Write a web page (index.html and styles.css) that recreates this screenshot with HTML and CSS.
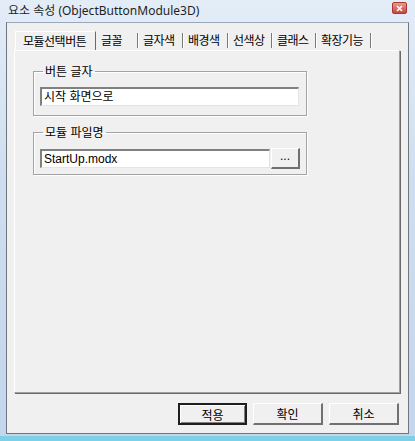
FILE: index.html
```html
<!DOCTYPE html>
<html lang="ko">
  <head>
    <meta charset="UTF-8" />
    <title>요소 속성</title>
    <link rel="stylesheet" href="styles.css">
  </head>
  <body>
    <div class="window">
      <!-- Title bar -->
      <div class="titlebar">
        <span class="title">요소 속성 (ObjectButtonModule3D)</span>
        <span class="close">
          <svg width="9" height="7" viewBox="0 0 9 7">
            <path d="M2 1 L7 6 M7 1 L2 6" stroke="#fff" stroke-width="1.6" />
          </svg>
        </span>
      </div>

      <div class="client">
        <!-- Tabs -->
        <div class="tabs">
          <div class="tab selected">모듈선택버튼</div>
          <div class="tab w42">글꼴</div>
          <div class="tab w45">글자색</div>
          <div class="tab w45">배경색</div>
          <div class="tab w44">선색상</div>
          <div class="tab w44">클래스</div>
          <div class="tab w55">확장기능</div>
        </div>

        <!-- Tab page -->
        <div class="panel">
          <fieldset class="group">
            <legend>버튼 글자</legend>
            <div class="edit wide">시작 화면으로</div>
          </fieldset>
          <fieldset class="group file">
            <legend>모듈 파일명</legend>
            <div class="row">
              <div class="edit narrow">StartUp.modx</div>
              <div class="btn dots">...</div>
            </div>
          </fieldset>
        </div>

        <!-- Dialog buttons -->
        <div class="buttons">
          <div class="btn default">적용</div>
          <div class="btn">확인</div>
          <div class="btn">취소</div>
        </div>
      </div>
    </div>
  </body>
</html>
```

FILE: styles.css
```css
body {
  margin: 0;
  background: #ffffff;
  font-family: "Liberation Sans", "Noto Sans CJK KR", sans-serif;
  font-size: 12px;
  color: #000;
}

.window {
  width: 415px;
  height: 441px;
  box-sizing: border-box;
  display: flex;
  flex-direction: column;
  background: linear-gradient(#e3edf8, #cfdeef 40%, #c4d6ec);
  border-bottom: 5px solid #7fd0e6;
}

.titlebar {
  height: 22px;
  display: flex;
  align-items: center;
  justify-content: space-between;
  padding: 0 8px 0 8px;
}

.title {
  font-family: "Noto Sans", "Noto Sans CJK KR", sans-serif;
  font-size: 12px;
  color: #1e1e1e;
  margin-top: -2px;
}

.close {
  width: 13px;
  height: 10px;
  display: flex;
  align-items: center;
  justify-content: center;
  background: linear-gradient(#e99a8c, #c9463a);
  border: 1px solid #a63a30;
  border-radius: 2px;
  margin-top: -6px;
}

.client {
  flex: 1;
  margin: 0 6px 2px 6px;
  background: #f0f0f0;
  border: 1px solid #6e7680;
  border-top-color: #9aa7b6;
  display: flex;
  flex-direction: column;
  padding: 7px 8px 0 7px;
}

/* Tabs */
.tabs {
  display: flex;
  height: 20px;
  align-items: flex-end;
  padding-left: 1px;
}

.tab {
  font-family: "Noto Sans CJK KR", sans-serif;
  font-size: 12px;
  letter-spacing: -0.5px;
  height: 15px;
  line-height: 14px;
  box-sizing: border-box;
  padding: 0 0 0 5px;
  border-right: 1px solid #7a7a7a;
  box-shadow: 1px 0 0 #ffffff;
  margin-bottom: 2px;
  white-space: nowrap;
}

.w42 { width: 42px; }
.w44 { width: 44px; }
.w45 { width: 45px; }
.w55 { width: 55px; }

.tab.selected {
  width: 81px;
  height: 19px;
  line-height: 18px;
  padding: 0 0 0 7px;
  font-size: 12px;
  border-top: 1px solid #ffffff;
  border-left: 1px solid #ffffff;
  border-right: 1px solid #6a6a6a;
  box-shadow: none;
  margin-bottom: 0;
}

.panel {
  height: 343px;
  box-sizing: border-box;
  border: 1px solid #a0a0a0;
  border-left-color: #ffffff;
  border-top-color: #ffffff;
  box-shadow: 1px 1px 0 #696969;
  padding: 13px 0 0 18px;
  display: flex;
  flex-direction: column;
  gap: 9px;
}

.group {
  width: 260px;
  margin: 0;
  padding: 9px 6px 9px 6px;
  border: 1px solid #a3a3a3;
  box-shadow: inset 1px 1px 0 #ffffff, 1px 1px 0 #ffffff;
}

.group.file {
  padding-bottom: 5px;
}

.group legend {
  font-family: "Noto Sans CJK KR", sans-serif;
  font-size: 12px;
  line-height: 14px;
  padding: 0 2px;
  margin-left: 3px;
}

.edit {
  height: 19px;
  box-sizing: border-box;
  background: #ffffff;
  border-top: 2px solid #808080;
  border-left: 2px solid #808080;
  border-right: 1px solid #e4e4e4;
  border-bottom: 1px solid #e4e4e4;
  padding: 0 3px 0 2px;
  line-height: 16px;
  font-family: "Liberation Sans", "Noto Sans CJK KR", sans-serif;
  font-size: 12px;
}

.wide {
  width: 259px;
}

.narrow {
  width: 230px;
}

.row {
  display: flex;
  gap: 1px;
  align-items: center;
}

.btn {
  height: 22px;
  box-sizing: border-box;
  display: flex;
  align-items: center;
  justify-content: center;
  background: #f0f0f0;
  border-top: 1px solid #ffffff;
  border-left: 1px solid #ffffff;
  border-right: 2px solid #707070;
  border-bottom: 2px solid #707070;
  font-family: "Noto Sans CJK KR", sans-serif;
  font-size: 12px;
}

.dots {
  width: 29px;
  height: 21px;
  font-family: "Liberation Sans", sans-serif;
  line-height: 10px;
  padding-bottom: 4px;
}

.buttons {
  display: flex;
  justify-content: flex-end;
  gap: 6px;
  margin-top: 10px;
  padding-right: 1px;
}

.buttons .btn {
  width: 70px;
}

.buttons .default {
  width: 69px;
  border: 2px solid #1e1e1e;
  box-shadow: inset 1px 1px 0 #ffffff, inset -1px -1px 0 #808080;
}
```
